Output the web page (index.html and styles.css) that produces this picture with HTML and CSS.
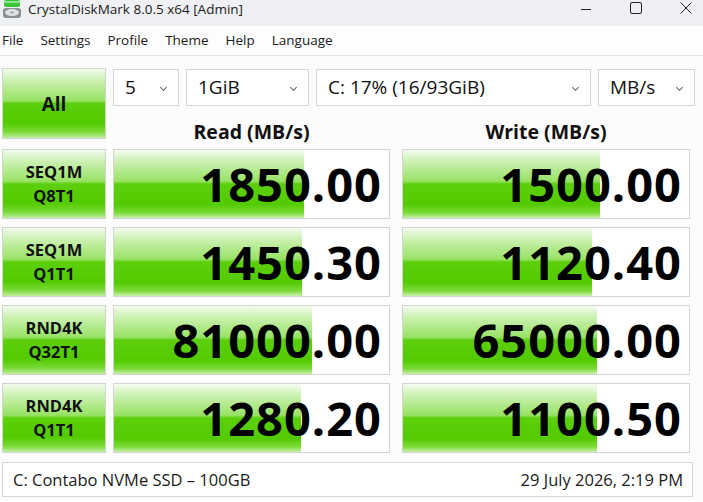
FILE: index.html
```html
<!DOCTYPE html>
<html lang="en">
<head>
  <meta charset="UTF-8">
  <meta name="viewport" content="width=device-width, initial-scale=1.0">
  <title>CrystalDiskMark 8.0.5 x64 [Admin]</title>
  <link rel="stylesheet" href="styles.css">
</head>
<body>
  <header class="titlebar">
    <svg class="app-icon" width="22" height="20" viewBox="0 0 22 20">
      <rect x="3" y="0" width="16" height="7" rx="2" fill="#3cc43c"/>
      <rect x="3" y="1" width="16" height="2" rx="1" fill="#8fe68f"/>
      <rect x="2" y="8" width="18" height="10" rx="3" fill="#8a8f94"/>
      <ellipse cx="11" cy="12.5" rx="7" ry="3.5" fill="#dfe2e5"/>
      <ellipse cx="11" cy="12.5" rx="2" ry="1" fill="#9aa0a5"/>
    </svg>
    <span class="title">CrystalDiskMark 8.0.5 x64 [Admin]</span>
    <div class="controls">
      <svg width="12" height="12" viewBox="0 0 12 12"><path d="M1 7.5h10" stroke="#222" stroke-width="1"/></svg>
      <svg width="12" height="12" viewBox="0 0 12 12"><rect x="0.5" y="0.5" width="11" height="11" rx="1.5" fill="none" stroke="#222" stroke-width="1"/></svg>
      <svg width="12" height="12" viewBox="0 0 12 12"><path d="M0.5 0.5l11 11M11.5 0.5l-11 11" stroke="#222" stroke-width="1"/></svg>
    </div>
  </header>

  <nav class="menubar">
    <span>File</span>
    <span>Settings</span>
    <span>Profile</span>
    <span>Theme</span>
    <span>Help</span>
    <span>Language</span>
  </nav>

  <main class="bench">
    <div class="top">
      <button class="green all">All</button>
      <div class="settings">
        <div class="selects">
          <div class="select count">5</div>
          <div class="select size">1GiB</div>
          <div class="select drive">C: 17% (16/93GiB)</div>
          <div class="select unit">MB/s</div>
        </div>
        <div class="heads">
          <div class="head read">Read (MB/s)</div>
          <div class="head write">Write (MB/s)</div>
        </div>
      </div>
    </div>

    <div class="rows">
      <div class="row">
        <div class="green label">SEQ1M<br>Q8T1</div>
        <div class="meter read"><div class="fill" style="width: 69%"></div><span class="value">1850.00</span></div>
        <div class="meter write"><div class="fill" style="width: 69%"></div><span class="value">1500.00</span></div>
      </div>
      <div class="row">
        <div class="green label">SEQ1M<br>Q1T1</div>
        <div class="meter read"><div class="fill" style="width: 68.5%"></div><span class="value">1450.30</span></div>
        <div class="meter write"><div class="fill" style="width: 66%"></div><span class="value">1120.40</span></div>
      </div>
      <div class="row">
        <div class="green label">RND4K<br>Q32T1</div>
        <div class="meter read"><div class="fill" style="width: 72%"></div><span class="value">81000.00</span></div>
        <div class="meter write"><div class="fill" style="width: 68%"></div><span class="value">65000.00</span></div>
      </div>
      <div class="row">
        <div class="green label">RND4K<br>Q1T1</div>
        <div class="meter read"><div class="fill" style="width: 68%"></div><span class="value">1280.20</span></div>
        <div class="meter write"><div class="fill" style="width: 68%"></div><span class="value">1100.50</span></div>
      </div>
    </div>

    <footer class="status">
      <span>C: Contabo NVMe SSD – 100GB</span>
      <span>29 July 2026, 2:19 PM</span>
    </footer>
  </main>
</body>
</html>
```

FILE: styles.css
```css
* { box-sizing: border-box; }
body { margin: 0; width: 703px; height: 502px; overflow: hidden; background: #fcfcfc; font-family: "Open Sans", "Noto Sans", sans-serif; color: #111; }

/* window chrome */
.titlebar { height: 26px; background: #eff0f3; display: flex; align-items: flex-start; position: relative; }
.app-icon { margin: 0 5px 0 1px; }
.title { font-size: 13.5px; line-height: 18px; color: #1b1b1b; }
.controls { margin-left: auto; display: flex; gap: 38px; padding: 2px 11px 0 0; }
.menubar { height: 30px; background: #fdfdfd; border-bottom: 1px solid #e6e6e6; display: flex; gap: 17px; padding-left: 2px; font-size: 13.5px; line-height: 29px; color: #1b1b1b; }

/* benchmark area */
.bench { padding: 12px 0 0 2px; }
.top { display: flex; height: 81px; }
.green {
  border: 1px solid #cfd6cb;
  background: linear-gradient(to bottom, #f2fcee 0%, #cdf1b4 16%, #97e264 46%, #5ccf0c 50%, #53cb00 78%, #78da34 91%, #c2eea3 100%);
  font-family: inherit; font-weight: 700; color: #111; text-align: center;
}
.all { width: 104px; height: 71px; margin-right: 7px; font-size: 19px; padding: 0; }
.settings { display: flex; flex-direction: column; }
.selects { display: flex; gap: 7px; margin-top: 1px; }
.select {
  height: 37px; border: 1px solid #d6d6d6; background: #fff; font-size: 19px; line-height: 35px;
  padding-left: 11px; position: relative;
}
.select::after {
  content: ""; position: absolute; right: 12px; top: 15px; width: 4px; height: 4px;
  border-right: 1px solid #666; border-bottom: 1px solid #666; transform: rotate(45deg);
}
.count { width: 66px; }
.size { width: 123px; }
.drive { width: 275px; }
.unit { width: 97px; }
.heads { display: flex; margin-top: 14px; height: 24px; }
.head { font-size: 19.5px; font-weight: 700; line-height: 24px; text-align: center; }
.head.read { width: 277px; margin-right: 12px; }
.head.write { width: 288px; }

.rows { display: flex; flex-direction: column; gap: 8px; }
.row { display: flex; height: 70px; }
.label { width: 104px; margin-right: 7px; font-size: 16.5px; line-height: 24px; display: flex; align-items: center; justify-content: center; }
.meter { position: relative; border: 1px solid #d4d4d4; background: #fff; display: flex; align-items: center; justify-content: flex-end; }
.meter.read { width: 277px; margin-right: 12px; }
.meter.write { width: 288px; }
.fill {
  position: absolute; left: 0; top: 0; bottom: 0;
  background: linear-gradient(to bottom, #f4fcf0 0%, #cdf1b4 16%, #97e264 46%, #5ccf0c 50%, #53cb00 80%, #7ada36 92%, #c8f0ab 100%);
}
.value { position: relative; font-size: 47px; font-weight: 700; color: #000; padding-right: 7px; letter-spacing: 1px; }

.status {
  margin-top: 9px; width: 691px; height: 35px; border: 1px solid #d6d6d6; background: #fff;
  display: flex; justify-content: space-between; align-items: center; padding: 0 9px 0 10px; font-size: 16.5px; color: #1b1b1b;
}
```
